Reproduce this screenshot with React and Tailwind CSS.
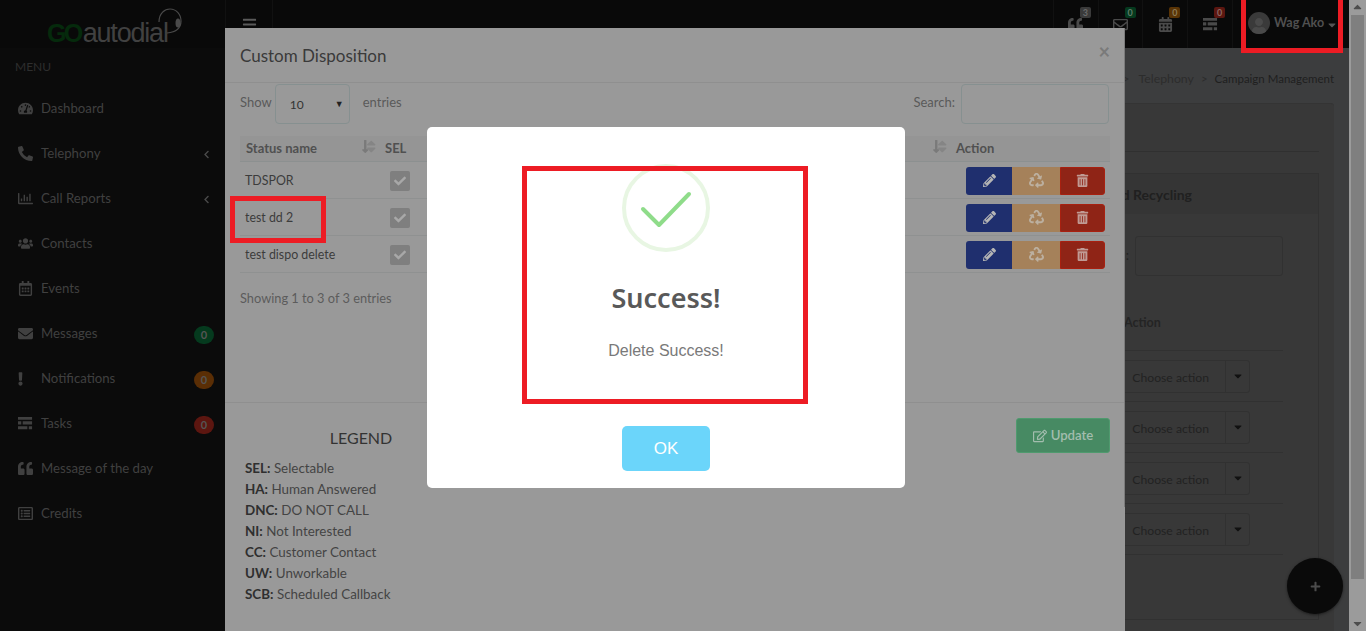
import React from "react";
import {
  FaBars, FaTachometerAlt, FaPhoneAlt, FaRegChartBar, FaUsers, FaRegCalendarAlt, FaEnvelope, FaExclamation,
  FaQuoteLeft, FaRegListAlt, FaChevronLeft, FaRegEnvelope, FaCalendarAlt, FaPencilAlt, FaRecycle, FaTrashAlt,
  FaCheck, FaRegEdit, FaPlus, FaCaretDown, FaUser, FaLongArrowAltDown, FaSort,
} from "react-icons/fa";

function TasksIcon({ className }) {
  return (
    <svg viewBox="0 0 16 14" className={className} fill="currentColor">
      <path d="M0 0h15v3H0zM5 4.5h10v3.5H5zM0 4.5h3.5v3.5H0zM0 10h10v3H0zM11.500 10H15v3h-3.500z" />
    </svg>
  );
}

const NAV = [
  { label: "Dashboard", Icon: FaTachometerAlt },
  { label: "Telephony", Icon: FaPhoneAlt, chevron: true },
  { label: "Call Reports", Icon: FaRegChartBar, chevron: true },
  { label: "Contacts", Icon: FaUsers },
  { label: "Events", Icon: FaRegCalendarAlt },
  { label: "Messages", Icon: FaEnvelope, badge: "bg-[#053a1e]" },
  { label: "Notifications", Icon: FaExclamation, badge: "bg-[#5a2e05]", narrow: true },
  { label: "Tasks", Icon: TasksIcon, badge: "bg-[#5c1610]" },
  { label: "Message of the day", Icon: FaQuoteLeft },
  { label: "Credits", Icon: FaRegListAlt },
];

const TOP = [
  { Icon: FaQuoteLeft, n: "3", c: "bg-[#3a3a3a] text-[#6a6a6a]" },
  { Icon: FaRegEnvelope, n: "0", c: "bg-[#053a1e] text-[#5f7a6a]" },
  { Icon: FaCalendarAlt, n: "0", c: "bg-[#5a3405] text-[#8a7a55]" },
  { Icon: TasksIcon, n: "0", c: "bg-[#5c1610] text-[#8a6a66]" },
];

const ROWS = ["TDSPOR", "test dd 2", "test dispo delete"];
const LEGEND = [
  ["SEL:", "Selectable"], ["HA:", "Human Answered"], ["DNC:", "DO NOT CALL"], ["NI:", "Not Interested"],
  ["CC:", "Customer Contact"], ["UW:", "Unworkable"], ["SCB:", "Scheduled Callback"],
];

function SortIcon() {
  return (
    <span className="w-[16px] flex items-center text-[#7a7a7a] text-[15px] -space-x-[5px] -mt-[4px]">
      <FaLongArrowAltDown />
      <FaSort className="text-[#858585]" />
    </span>
  );
}

function Annot({ className }) {
  return <div className={`absolute border-[5px] border-[#ed1c24] pointer-events-none ${className}`} />;
}

export default function App() {
  return (
    <div className="relative w-[1366px] h-[631px] overflow-hidden flex bg-[#3c3d3e] font-['Lato','Noto_Sans',sans-serif] text-[13px]">
      <div className="flex-1 min-w-0 flex flex-col">
        {/* top bar */}
        <header className="h-[48px] shrink-0 flex items-stretch bg-[#090909]">
          <div className="w-[225px] shrink-0 relative">
            <div className="flex items-center h-full pl-[47px] pt-[19px] font-['Liberation_Sans',sans-serif] leading-none">
              <span className="font-bold text-[#052a0c] text-[25px] tracking-[-2.6px]">GO</span>
              <span className="text-[#414141] text-[27px] tracking-[-1.2px] ml-[2px]">autodial</span>
            </div>
            <svg viewBox="0 0 26 28" className="absolute left-[158px] top-[8px] w-[26px] h-[28px] text-[#4a4a4a]" fill="none" stroke="currentColor" strokeWidth="1.2">
              <path d="M1 14C1 5 7 1 12 1c6 0 11 5 11 12 0 6-4 11-14 12" />
              <ellipse cx="20" cy="15" rx="2.500" ry="4.500" fill="currentColor" stroke="none" />
            </svg>
          </div>
          <div className="w-[48px] shrink-0 flex items-center justify-center border-x border-[#111] text-[#5a5a5a] text-[15px]">
            <FaBars />
          </div>
          <div className="flex-1" />
          {TOP.map(({ Icon, n, c }, i) => (
            <div key={i} className="relative w-[44.8px] flex items-center justify-center border-l border-[#111] text-[#4a4a4a] text-[15px]">
              <Icon className="w-[15px] h-[15px]" />
              <span className={`absolute left-[26px] top-[7px] w-[11px] h-[11px] rounded-[2px] text-[9px] leading-[11px] font-bold text-center ${c}`}>{n}</span>
            </div>
          ))}
          <div className="w-[117px] flex items-center border-l border-[#111] pl-[15px] pb-[2px]">
            <div className="w-[22px] h-[22px] rounded-full bg-[#3a3a3a] flex items-end justify-center overflow-hidden text-[#4a4a4a] text-[16px]">
              <FaUser />
            </div>
            <span className="ml-[4px] text-[#505050] font-bold text-[12.5px]">Wag Ako</span>
            <FaCaretDown className="text-[#555] text-[12px] ml-[2px] mt-[3px]" />
          </div>
        </header>

        <div className="flex-1 flex min-h-0">
          {/* sidebar */}
          <aside className="w-[225px] shrink-0 bg-[#0b0b0b] flex flex-col">
            <div className="h-[38px] flex items-center pl-[15px] text-[12px] text-[#2e2e2e]">MENU</div>
            {NAV.map(({ label, Icon, chevron, badge, narrow }) => (
              <div key={label} className="h-[45px] shrink-0 flex items-center pl-[18px] pr-[11px] text-[#404040] text-[13.2px]">
                <span className="w-[23px] shrink-0"><Icon className={narrow ? "w-[5px] h-[14px]" : "w-[15px] h-[15px]"} /></span>
                <span className="flex-1">{label}</span>
                {chevron && <FaChevronLeft className="text-[9px] text-[#4a4a4a] mr-[3px] mt-[2px]" />}
                {badge && <span className={`w-[20px] h-[18px] rounded-full text-[11px] font-bold leading-[18px] text-center text-[#555] mt-[3px] ${badge}`}>0</span>}
              </div>
            ))}
          </aside>

          {/* page behind the dialog */}
          <main className="flex-1 min-w-0 pr-[15px] flex flex-col">
            <div className="h-[55px] shrink-0 flex items-start justify-end pt-[23px] text-[11.5px] leading-[16px]">
              <span className="text-[#2c2c2c]">&gt;</span>
              <span className="text-[#2c2c2c] ml-[9px] text-[12.3px]">Telephony</span>
              <span className="text-[#2c2c2c] mx-[7px]">&gt;</span>
              <span className="text-[#1f1f1f]">Campaign Management</span>
            </div>
            <div className="flex-1 bg-[#383838] border-t border-l border-[#343434] rounded-t-[3px] flex flex-col pt-[47px] pr-[15px]">
              <div className="border-t border-[#303030] pt-[21px] pb-[11px] flex-1 flex flex-col">
                <div className="flex-1 border border-[#313131] flex flex-col">
                  <div className="h-[40px] shrink-0 bg-[#353535] flex items-center justify-end pr-[126px] font-bold text-[#202020] text-[14px]">Lead Recycling</div>
                  <div className="w-[400px] self-end mr-[35px] flex flex-col">
                    <div className="h-[22px]" />
                    <div className="flex items-center justify-end gap-[6px] text-[#222]">
                      <span>:</span>
                      <div className="w-[148px] h-[40px] border border-[#313131] rounded-[3px]" />
                    </div>
                    <div className="h-[75px] flex items-end border-b border-[#313131] pb-[17px] pl-[241px] font-bold text-[12.5px] text-[#242424]">Action</div>
                    {[0, 1, 2, 3].map((i) => (
                      <div key={i} className="h-[51px] shrink-0 border-b border-[#313131] flex items-center">
                        <div className="ml-[192px] w-[175px] h-[33px] flex border border-[#313131] rounded-[3px] text-[12.2px] text-[#222]">
                          <span className="w-[150px] text-right pr-[16px] leading-[33px] border-r border-[#313131]">Choose action</span>
                          <span className="flex-1 flex items-center justify-center text-[#111] text-[12px]"><FaCaretDown /></span>
                        </div>
                      </div>
                    ))}
                  </div>
                </div>
              </div>
            </div>
          </main>
        </div>
      </div>

      {/* scrollbar */}
      <div className="w-[17px] shrink-0 bg-[#9b9b9b] flex flex-col items-center text-[#4d4d4d]">
        <FaCaretDown className="rotate-180 text-[13px] mt-[1px]" />
        <div className="w-[13px] h-[564px] mt-[1px] bg-[#7f7f7f]" />
        <div className="flex-1" />
        <FaCaretDown className="text-[13px] mb-[1px]" />
      </div>

      {/* floating button */}
      <div className="absolute left-[1287px] top-[558px] w-[56px] h-[56px] rounded-full bg-[#0a0a0a] shadow-[0_1px_3px_rgba(0,0,0,.5)] flex items-center justify-center text-[#4c4c4c] text-[11px]">
        <FaPlus />
      </div>

      {/* dialog */}
      <section className="absolute left-[225px] top-[28px] w-[900px] h-[603px] bg-[#999] text-[#444] flex flex-col">
        <div className="absolute right-0 top-0 w-px h-[479px] bg-[#7c7c7c]" />
        <div className="h-[55px] shrink-0 border-b border-[#8f8f8f] flex items-center justify-between pl-[15px] pr-[15px]">
          <span className="text-[17px] text-[#3a3a3a] mt-[2px]">Custom Disposition</span>
          <span className="text-[20px] font-bold text-[#7a7a7a] -mt-[8px]">×</span>
        </div>
        <div className="flex items-center justify-between pl-[15px] pr-[16px] mt-[1px] h-[40px] shrink-0 text-[#5a5a5a]">
          <div className="flex items-center">
            <span className="-mt-[3px]">Show</span>
            <div className="ml-[3px] w-[75px] h-[40px] border border-[#869090] rounded-[4px] flex items-center justify-between pl-[14px] pr-[4px] text-[12px] text-[#333]">
              <span className="mt-[2px]">10</span>
              <span className="text-[9px] text-[#222] mr-[1px]">▼</span>
            </div>
            <span className="ml-[13px] -mt-[3px]">entries</span>
          </div>
          <div className="flex items-center gap-[6px]">
            <span className="-mt-[3px]">Search:</span>
            <div className="w-[148px] h-[40px] border border-[#869090] rounded-[4px]" />
          </div>
        </div>

        <div className="mx-[15px] mt-[12px] shrink-0">
          <div className="h-[26px] bg-[#959595] border-b border-[#8c9090] flex items-center font-bold text-[13px] text-[#505050]">
            <span className="pl-[6px] w-[120px]">Status name</span>
            <SortIcon />
            <span className="ml-[9px]">SEL</span>
            <span className="flex-1" />
            <SortIcon />
            <span className="ml-[9px] w-[154px]">Action</span>
          </div>
          {ROWS.map((r) => (
            <div key={r} className="h-[37px] border-b border-[#8f9191] flex items-center text-[12.4px] text-[#3c3c3c]">
              <span className="pl-[5px] w-[150px] mt-[3px]">{r}</span>
              <span className="w-[20px] h-[20px] rounded-[2px] bg-[#7f7f7f] flex items-center justify-center text-[#a8a8a8] text-[12px] mt-[2px]"><FaCheck /></span>
              <span className="flex-1" />
              <div className="flex h-[28px] mr-[5px] mt-[1px] text-[13px] text-[#b5b5b5]">
                <span className="w-[46px] bg-[#1f2f6e] rounded-l-[3px] flex items-center justify-center"><FaPencilAlt /></span>
                <span className="w-[48px] bg-[#a5815a] flex items-center justify-center text-[15px] text-[#bcb0a0]"><FaRecycle /></span>
                <span className="w-[45px] bg-[#8f2416] border border-[#a82010] rounded-r-[3px] flex items-center justify-center text-[#c09a94]"><FaTrashAlt className="text-[13px]" /></span>
              </div>
            </div>
          ))}
        </div>

        <div className="mt-[15px] ml-[15px] leading-[20px] text-[12.8px] text-[#5c5c5c] shrink-0">Showing 1 to 3 of 3 entries</div>

        <div className="mt-[94px] border-t border-[#8f8f8f] flex-1 flex justify-between pt-[15px] pl-[20px] pr-[15px]">
          <div className="w-[232px] text-[13.4px]">
            <div className="text-[16px] leading-[20px] text-[#333] text-center mt-[10px] mb-[10px]">LEGEND</div>
            {LEGEND.map(([k, v]) => (
              <div key={k} className="h-[21px] leading-[21px] text-[#444]"><b className="text-[#2f2f2f]">{k}</b> {v}</div>
            ))}
          </div>
          <div className="w-[94px] h-[35px] bg-[#478a63] border border-[#4f9a6e] rounded-[3px] flex items-center justify-center gap-[4px] text-[#a3bdae] font-semibold text-[13.2px]">
            <FaRegEdit className="text-[14px]" /> Update
          </div>
        </div>
      </section>

      {/* alert */}
      <section className="absolute left-[427px] top-[127px] w-[478px] h-[361px] bg-white rounded-[5px] flex flex-col items-center">
        <div className="mt-[37px] w-[88px] h-[88px] rounded-full border-[4px] border-[#e8f6e3] flex items-center justify-center shrink-0">
          <svg viewBox="0 0 52 38" className="w-[52px] h-[38px] mt-[1px]" fill="none" stroke="#8fdc8a" strokeWidth="4" strokeLinecap="round" strokeLinejoin="round">
            <path d="M3 19l16 16L49 4" />
          </svg>
        </div>
        <h2 className="mt-[28px] text-[27px] leading-[36px] font-semibold text-[#595959] font-['Noto_Sans',sans-serif]">Success!</h2>
        <p className="mt-[25px] text-[16px] leading-[20px] text-[#797979] font-['Liberation_Sans',sans-serif]">Delete Success!</p>
        <button className="mt-[65px] w-[88px] h-[45px] rounded-[5px] bg-[#6bd5fa] text-white text-[17px] font-['Liberation_Sans',sans-serif]">OK</button>
      </section>

      {/* red annotations */}
      <Annot className="left-[1241px] top-[-5px] w-[102px] h-[58px]" />
      <Annot className="left-[230px] top-[196px] w-[96px] h-[47px]" />
      <Annot className="left-[522px] top-[166px] w-[286px] h-[238px]" />
    </div>
  );
}
